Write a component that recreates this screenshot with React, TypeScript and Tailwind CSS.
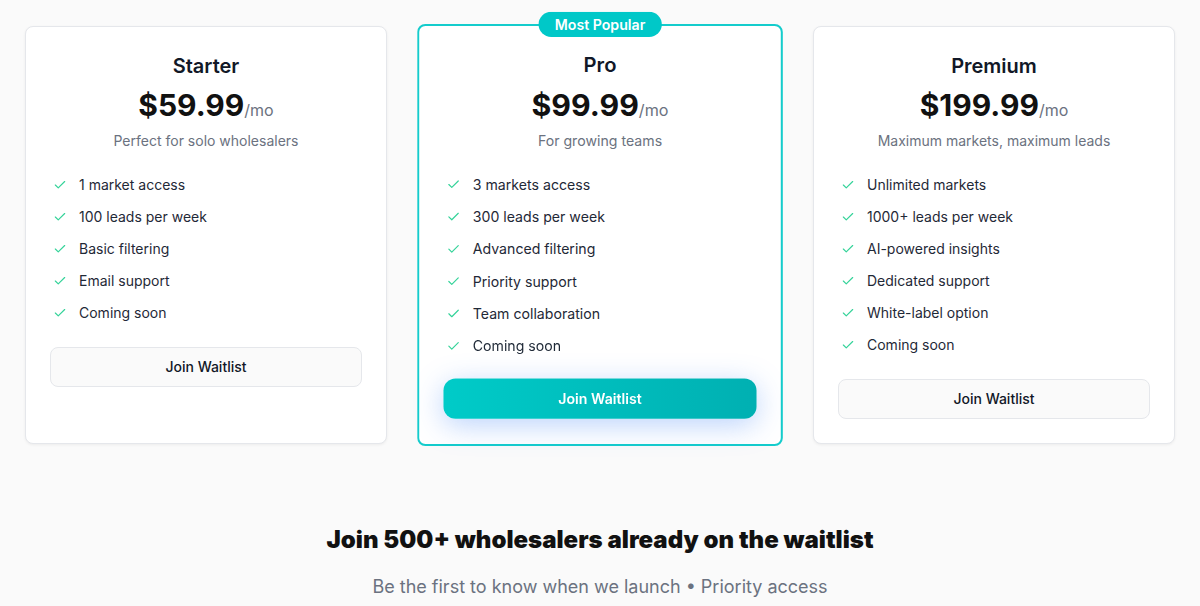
import { Check } from "lucide-react"

type Plan = {
  name: string
  price: string
  blurb: string
  features: string[]
  popular?: boolean
}

const plans: Plan[] = [
  {
    name: "Starter",
    price: "$59.99",
    blurb: "Perfect for solo wholesalers",
    features: ["1 market access", "100 leads per week", "Basic filtering", "Email support", "Coming soon"],
  },
  {
    name: "Pro",
    price: "$99.99",
    blurb: "For growing teams",
    features: [
      "3 markets access",
      "300 leads per week",
      "Advanced filtering",
      "Priority support",
      "Team collaboration",
      "Coming soon",
    ],
    popular: true,
  },
  {
    name: "Premium",
    price: "$199.99",
    blurb: "Maximum markets, maximum leads",
    features: [
      "Unlimited markets",
      "1000+ leads per week",
      "AI-powered insights",
      "Dedicated support",
      "White-label option",
      "Coming soon",
    ],
  },
]

const PlanCard = ({ plan }: { plan: Plan }) => {
  return (
    <div
      className={
        plan.popular
          ? "relative bg-white rounded-lg border-2 border-[#14cccc] px-6 pt-[24px] pb-[22px] scale-[1.01]"
          : "relative bg-white rounded-lg border border-[#e5e7eb] px-6 pt-6 pb-6 shadow-[0_1px_3px_rgba(0,0,0,0.06)]"
      }
    >
      {plan.popular && (
        <div className="absolute -top-[14px] left-1/2 -translate-x-1/2 bg-[#00c8c8] text-white text-sm font-semibold rounded-full px-4 h-[25px] flex items-center">
          Most Popular
        </div>
      )}
      <div className="text-center">
        <h3 className="text-xl font-semibold text-[#111827] leading-7 mt-px">{plan.name}</h3>
        <div className="mt-[5px] flex items-baseline justify-center">
          <span className="text-3xl leading-[40px] font-bold text-[#111111]">{plan.price}</span>
          <span className="text-base text-[#6b7280]">/mo</span>
        </div>
        <p className="mt-[6px] text-sm text-[#6b7280]">{plan.blurb}</p>
      </div>
      <ul className={plan.popular ? "mt-[17px] flex flex-col" : "mt-[18px] flex flex-col"}>
        {plan.features.map((f) => (
          <li key={f} className="flex items-center gap-3 h-8 pl-[3px] text-sm text-[#1f2937]">
            <Check className="w-[14px] h-[14px] text-[#34d399]" strokeWidth={2} />
            <span>{f}</span>
          </li>
        ))}
      </ul>
      {plan.popular ? (
        <button className="mt-[16px] w-full h-10 rounded-xl bg-gradient-to-r from-[#00cbc8] to-[#00b0b2] text-white text-sm font-semibold shadow-[0_6px_28px_rgba(59,130,246,0.35)]">
          Join Waitlist
        </button>
      ) : (
        <button className="mt-[18px] w-full h-10 rounded-lg bg-[#fafafa] border border-[#e5e7eb] text-sm font-medium text-[#111827]">
          Join Waitlist
        </button>
      )}
    </div>
  )
}

const App = () => {
  return (
    <div className="min-h-screen bg-[#fafafa] font-['Inter',sans-serif] overflow-hidden">
      <div className="max-w-[1150px] mx-auto pt-[26px] grid grid-cols-3 gap-8">
        {plans.map((p) => (
          <PlanCard key={p.name} plan={p} />
        ))}
      </div>
      <div className="text-center mt-[80px]">
        <h2 className="text-2xl font-black text-[#111111]">Join 500+ wholesalers already on the waitlist</h2>
        <p className="mt-[17px] text-lg text-[#6b7280]">Be the first to know when we launch • Priority access</p>
      </div>
    </div>
  )
}

export default App
